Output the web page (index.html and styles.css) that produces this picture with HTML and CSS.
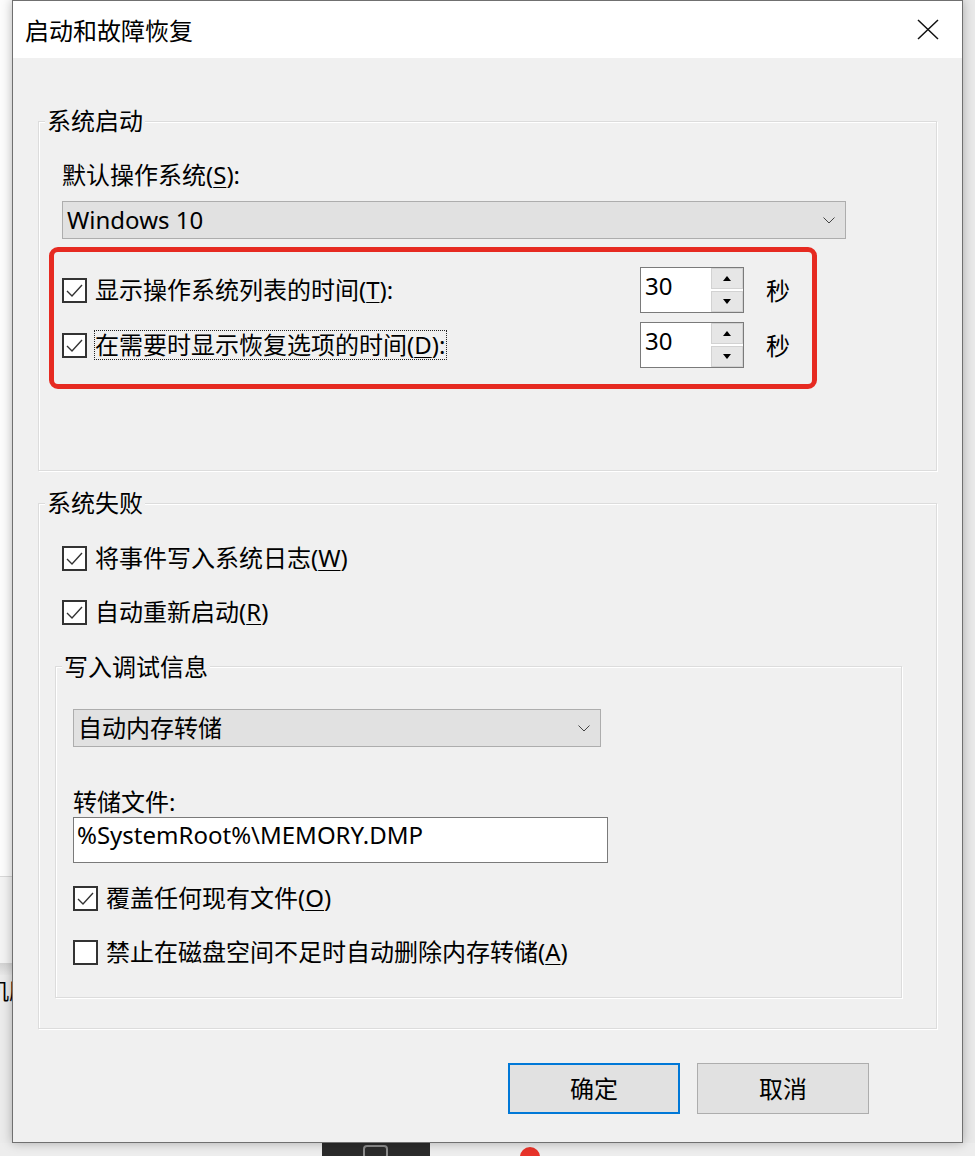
FILE: index.html
```html
<!DOCTYPE html>
<html>
<head>
<meta charset="utf-8">
<title>启动和故障恢复</title>
<link rel="stylesheet" href="styles.css">
</head>

<body>
<div class="desk">
	<!-- 窗口后面的桌面 -->
	<div class="desk-left">
		<div class="dl-top"></div>
		<div class="dl-mid"></div>
		<div class="dl-band"></div>
		<div class="dl-text">机服</div>
	</div>

	<div class="win">
		<div class="title-bar">
			<span class="title">启动和故障恢复</span>
			<svg class="close" width="22" height="21" viewBox="0 0 22 21"><path d="M1 1L21 20M21 1L1 20" stroke="#111" stroke-width="1.5" fill="none"/></svg>
		</div>

		<div class="win-body">
			<div class="group g1">
				<div class="g-title"><span>系统启动</span></div>
				<div class="txt lbl-os">默认操作系统(<u>S</u>):</div>
				<div class="combo combo-os">
					<span>Windows 10</span>
					<svg width="12" height="7" viewBox="0 0 12 7"><path d="M0.5 0.5L6 6L11.5 0.5" stroke="#444" stroke-width="1" fill="none"/></svg>
				</div>
				<div class="mark">
					<div class="row">
						<span class="cb"><svg width="21" height="21" viewBox="0 0 21 21"><path d="M3 11L8 16L18 5" stroke="#333" stroke-width="1.4" fill="none"/></svg></span>
						<span class="txt cb-txt">显示操作系统列表的时间(<u>T</u>):</span>
						<div class="spin">
							<span class="spin-val">30</span>
							<div class="spin-btns"><span class="sb"><i class="up"></i></span><span class="sb"><i class="down"></i></span></div>
						</div>
						<span class="txt unit">秒</span>
					</div>
					<div class="row">
						<span class="cb"><svg width="21" height="21" viewBox="0 0 21 21"><path d="M3 11L8 16L18 5" stroke="#333" stroke-width="1.4" fill="none"/></svg></span>
						<span class="txt cb-txt focus">在需要时显示恢复选项的时间(<u>D</u>):</span>
						<div class="spin">
							<span class="spin-val">30</span>
							<div class="spin-btns"><span class="sb"><i class="up"></i></span><span class="sb"><i class="down"></i></span></div>
						</div>
						<span class="txt unit">秒</span>
					</div>
				</div>
			</div>

			<div class="group g2">
				<div class="g-title"><span>系统失败</span></div>
				<div class="cb-row r-log">
					<span class="cb"><svg width="21" height="21" viewBox="0 0 21 21"><path d="M3 11L8 16L18 5" stroke="#333" stroke-width="1.4" fill="none"/></svg></span>
					<span class="txt cb-txt">将事件写入系统日志(<u>W</u>)</span>
				</div>
				<div class="cb-row r-restart">
					<span class="cb"><svg width="21" height="21" viewBox="0 0 21 21"><path d="M3 11L8 16L18 5" stroke="#333" stroke-width="1.4" fill="none"/></svg></span>
					<span class="txt cb-txt">自动重新启动(<u>R</u>)</span>
				</div>

				<div class="group g3">
					<div class="g-title"><span>写入调试信息</span></div>
					<div class="combo combo-dump">
						<span>自动内存转储</span>
						<svg width="12" height="7" viewBox="0 0 12 7"><path d="M0.5 0.5L6 6L11.5 0.5" stroke="#444" stroke-width="1" fill="none"/></svg>
					</div>
					<div class="txt lbl-file">转储文件:</div>
					<div class="edit">%SystemRoot%\MEMORY.DMP</div>
					<div class="cb-row r-over">
						<span class="cb"><svg width="21" height="21" viewBox="0 0 21 21"><path d="M3 11L8 16L18 5" stroke="#333" stroke-width="1.4" fill="none"/></svg></span>
						<span class="txt cb-txt">覆盖任何现有文件(<u>O</u>)</span>
					</div>
					<div class="cb-row r-nodel">
						<span class="cb"></span>
						<span class="txt cb-txt">禁止在磁盘空间不足时自动删除内存转储(<u>A</u>)</span>
					</div>
				</div>
			</div>

			<div class="btns">
				<span class="btn btn-ok">确定</span>
				<span class="btn">取消</span>
			</div>
		</div>
	</div>

	<div class="desk-right"></div>

	<div class="desk-bottom">
		<div class="task-app"><i></i></div>
		<div class="rec-dot"></div>
	</div>
</div>
</body>
</html>
```

FILE: styles.css
```css
*{ margin:0; padding:0; box-sizing:border-box;}
body{ background:#ececec; font-family:"Noto Sans","Noto Sans CJK SC",sans-serif; font-size:24px; color:#000; overflow:hidden;}
u{ text-decoration:underline; text-underline-offset:3px; text-decoration-thickness:1px;}

/* 桌面 */
.desk{ width:975px; height:1156px; display:grid; grid-template-columns:12px 951px 12px; grid-template-rows:1143px 13px;}
.desk-left{ grid-column:1; grid-row:1; background:#ebebeb; display:flex; flex-direction:column; overflow:hidden;}
.dl-top{ height:877px; background:#fcfcfc; border-bottom:1px solid #d8d8d8;}
.dl-mid{ height:86px; background:#f3f3f3;}
.dl-band{ height:12px; background:linear-gradient(#d2d2d2,#e8e8e8);}
.dl-text{ margin-left:-13px; font-size:22px; line-height:28px; white-space:nowrap; font-family:"Noto Sans CJK SC",sans-serif;}
.desk-right{ grid-column:3; grid-row:1; background:#e9e9e9;}
.desk-bottom{ grid-column:1 / 4; grid-row:2; background:#ededed; display:flex; align-items:flex-start; overflow:hidden;}
.task-app{ margin-left:322px; width:108px; height:13px; background:#2b2b2b; padding:2px 0 0 41px;}
.task-app i{ display:block; width:25px; height:14px; border:2px solid #8c8c8c; border-radius:4px;}
.rec-dot{ margin:4px 0 0 90px; width:20px; height:20px; border-radius:50%; background:#e8332a;}

/* 窗口 */
.win{ grid-column:2; grid-row:1; border:1px solid #707070; background:#f0f0f0; display:flex; flex-direction:column; box-shadow:0 0 10px rgba(0,0,0,.28); position:relative; z-index:1;}
.title-bar{ height:57px; background:#fff; display:flex; justify-content:space-between; align-items:flex-start; padding:14px 23px 0 12px;}
.title{ line-height:30px; font-family:"Noto Sans CJK SC",sans-serif;}
.close{ margin-top:4px;}
.win-body{ display:flex; flex-direction:column; padding:0 25px;}

.txt{ line-height:30px; white-space:nowrap;}

/* 分组框 */
.group{ border:1px solid #dcdcdc; box-shadow:inset 1px 1px 0 #fff, 1px 1px 0 #fff; padding-left:23px;}
.g-title{ height:30px; line-height:30px; margin:-16px 0 0 -17px;}
.g-title span{ background:#f0f0f0; padding:0 2px;}
.g1{ margin-top:63px; height:350px;}
.g2{ margin-top:32px; height:526px;}
.g3{ margin:39px 0 0 -7px; width:847px; height:332px; padding-left:17px;}
.g3 .g-title{ margin:-15px 0 0 -11px;}

.lbl-os{ margin-top:24px;}
.combo{ height:38px; background:#e1e1e1; border:1px solid #adadad; display:flex; align-items:center; justify-content:space-between; padding:0 10px 0 4px; line-height:30px; white-space:nowrap;}
.combo-os{ margin-top:11px; width:784px;}
.combo-dump{ margin-top:27px; width:528px;}

/* 红框 */
.mark{ margin:8px 0 0 -13px; width:768px; height:142px; border:5px solid #e62a21; border-radius:9px; padding:15px 22px 0 8px; display:flex; flex-direction:column; gap:9px;}
.row{ height:46px; display:flex; align-items:center;}
.cb{ width:25px; height:25px; flex:none; border:2px solid #333; background:#fff; display:flex; align-items:center; justify-content:center;}
.cb-txt{ margin-left:8px;}
.focus{ margin-left:7px; border:1px dotted #222; line-height:28px; padding:0 1px 0 0;}
.spin{ margin-left:auto; width:104px; height:46px; border:1px solid #7a7a7a; background:#fff; display:flex;}
.spin-val{ flex:1; padding:3px 0 0 4px; line-height:30px;}
.spin-btns{ width:32px; display:flex; flex-direction:column; gap:2px;}
.sb{ flex:1; background:#e6e6e6; border:1px solid #d2d2d2; display:flex; align-items:center; justify-content:center;}
.up{ width:0; height:0; border-left:4px solid transparent; border-right:4px solid transparent; border-bottom:5px solid #000;}
.down{ width:0; height:0; border-left:4px solid transparent; border-right:4px solid transparent; border-top:5px solid #000;}
.unit{ margin-left:22px; font-family:"Noto Sans CJK SC",sans-serif;}

.cb-row{ height:30px; display:flex; align-items:center;}
.r-log{ margin-top:25px;}
.r-restart{ margin-top:24px;}
.r-over{ margin-top:20px;}
.r-nodel{ margin-top:24px;}

.lbl-file{ margin-top:40px;}
.edit{ width:535px; height:46px; background:#fff; border:1px solid #7a7a7a; padding:2px 0 0 3px; line-height:30px; white-space:nowrap;}

/* 按钮 */
.btns{ margin-top:34px; display:flex; justify-content:flex-end; gap:17px; padding-right:68px;}
.btn{ width:172px; height:51px; background:#e1e1e1; border:1px solid #adadad; display:flex; align-items:center; justify-content:center; line-height:30px;}
.btn-ok{ border:2px solid #0078d7;}
```
